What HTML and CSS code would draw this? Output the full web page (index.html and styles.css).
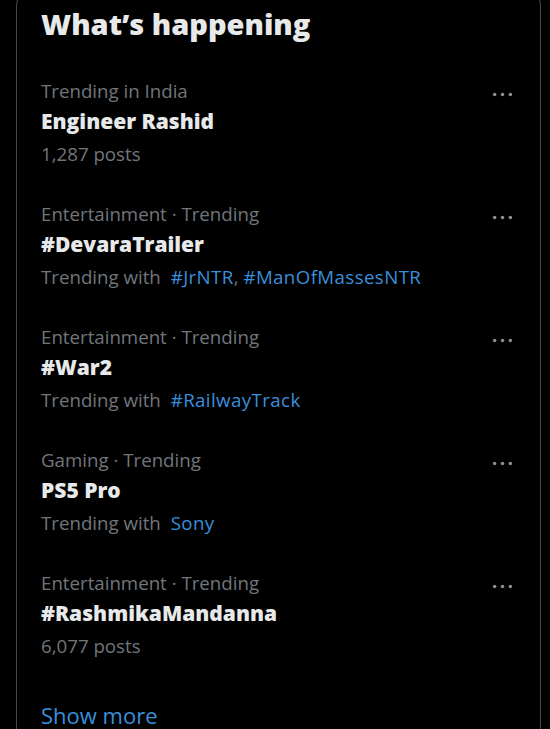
FILE: index.html
```html
<!DOCTYPE html>
<html>
<head>
<meta charset="utf-8">
<link rel="stylesheet" href="styles.css">
</head>
<body>
<section class="card">
  <h2 class="title">What’s happening</h2>

  <div class="trend">
    <div class="info">
      <div class="cat">Trending in India</div>
      <div class="name">Engineer Rashid</div>
      <div class="meta">1,287 posts</div>
    </div>
    <svg class="more" viewBox="0 0 24 24"><circle cx="3" cy="12" r="2"/><circle cx="12" cy="12" r="2"/><circle cx="21" cy="12" r="2"/></svg>
  </div>

  <div class="trend">
    <div class="info">
      <div class="cat">Entertainment · Trending</div>
      <div class="name">#DevaraTrailer</div>
      <div class="meta">Trending with <span class="link">#JrNTR</span>, <span class="link next">#ManOfMassesNTR</span></div>
    </div>
    <svg class="more" viewBox="0 0 24 24"><circle cx="3" cy="12" r="2"/><circle cx="12" cy="12" r="2"/><circle cx="21" cy="12" r="2"/></svg>
  </div>

  <div class="trend">
    <div class="info">
      <div class="cat">Entertainment · Trending</div>
      <div class="name">#War2</div>
      <div class="meta">Trending with <span class="link">#RailwayTrack</span></div>
    </div>
    <svg class="more" viewBox="0 0 24 24"><circle cx="3" cy="12" r="2"/><circle cx="12" cy="12" r="2"/><circle cx="21" cy="12" r="2"/></svg>
  </div>

  <div class="trend">
    <div class="info">
      <div class="cat">Gaming · Trending</div>
      <div class="name">PS5 Pro</div>
      <div class="meta">Trending with <span class="link">Sony</span></div>
    </div>
    <svg class="more" viewBox="0 0 24 24"><circle cx="3" cy="12" r="2"/><circle cx="12" cy="12" r="2"/><circle cx="21" cy="12" r="2"/></svg>
  </div>

  <div class="trend">
    <div class="info">
      <div class="cat">Entertainment · Trending</div>
      <div class="name">#RashmikaMandanna</div>
      <div class="meta">6,077 posts</div>
    </div>
    <svg class="more" viewBox="0 0 24 24"><circle cx="3" cy="12" r="2"/><circle cx="12" cy="12" r="2"/><circle cx="21" cy="12" r="2"/></svg>
  </div>

  <div class="show-more">Show more</div>
</section>
</body>
</html>
```
FILE: styles.css
```css
html, body {
  margin: 0;
  padding: 0;
  background: #000;
  height: 100%;
  overflow: hidden;
}

body {
  font-family: "Open Sans", "Liberation Sans", sans-serif;
  color: #e7e9ea;
}

.card {
  box-sizing: border-box;
  width: 525px;
  margin: -10px 0 0 16px;
  border: 1px solid #44484c;
  border-bottom: none;
  border-radius: 16px 16px 0 0;
  min-height: 760px;
}

.title {
  margin: 0;
  padding: 15px 24px 21px;
  font-size: 29px;
  line-height: 36px;
  font-weight: 800;
  color: #e7e9ea;
}

.trend {
  display: flex;
  align-items: flex-start;
  justify-content: space-between;
  padding: 14px 27px 15px 24px;
}

.info {
  display: flex;
  flex-direction: column;
}

.cat {
  height: 28px;
  line-height: 28px;
  font-size: 18.7px;
  color: #71767b;
}

.name {
  height: 32px;
  line-height: 32px;
  font-size: 21px;
  font-weight: 800;
  color: #e7e9ea;
}

.meta {
  height: 34px;
  line-height: 34px;
  font-size: 18.7px;
  color: #71767b;
}

.link {
  color: #3a8fdc;
  margin-left: 5px;
  letter-spacing: 0.4px;
}

.link.next {
  margin-left: 0;
}

.more {
  width: 21px;
  height: 21px;
  margin-top: 7px;
  fill: #8b9096;
}

.show-more {
  padding: 22px 24px 0;
  font-size: 22px;
  line-height: 30px;
  color: #3a8fdc;
}
```
